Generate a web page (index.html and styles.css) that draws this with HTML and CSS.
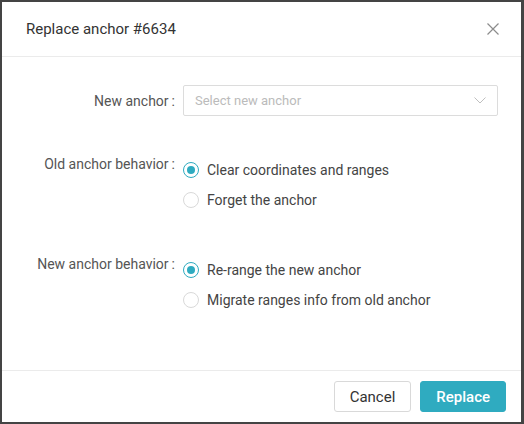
FILE: index.html
```html
<!DOCTYPE html>
<html lang="en">
<head>
    <meta charset="UTF-8">
    <meta name="viewport" content="width=device-width, initial-scale=1.0">
    <title>Replace anchor</title>
    <link rel="stylesheet" href="styles.css">
</head>
<body>
    <div class="backdrop">
        <div class="modal">
            <div class="modal-header">
                <h2 class="modal-title">Replace anchor #6634</h2>
                <button class="close-btn" aria-label="Close">
                    <svg width="12" height="12" viewBox="0 0 12 12">
                        <path d="M0.5 0.5 L11.5 11.5 M11.5 0.5 L0.5 11.5" stroke="#8c8c8c" stroke-width="1.2" fill="none"/>
                    </svg>
                </button>
            </div>

            <form class="modal-body">
                <div class="form-row form-row-select">
                    <label class="form-label">New anchor</label>
                    <div class="select">
                        <span class="select-placeholder">Select new anchor</span>
                        <svg class="select-arrow" width="12" height="7" viewBox="0 0 12 7">
                            <path d="M0.5 0.5 L6 6 L11.5 0.5" stroke="#bfbfbf" stroke-width="1" fill="none"/>
                        </svg>
                    </div>
                </div>

                <div class="form-row">
                    <label class="form-label">Old anchor behavior</label>
                    <div class="radio-group">
                        <label class="radio">
                            <input type="radio" name="oldBehavior" checked>
                            <span class="radio-circle"></span>
                            <span>Clear coordinates and ranges</span>
                        </label>
                        <label class="radio">
                            <input type="radio" name="oldBehavior">
                            <span class="radio-circle"></span>
                            <span>Forget the anchor</span>
                        </label>
                    </div>
                </div>

                <div class="form-row">
                    <label class="form-label">New anchor behavior</label>
                    <div class="radio-group">
                        <label class="radio">
                            <input type="radio" name="newBehavior" checked>
                            <span class="radio-circle"></span>
                            <span>Re-range the new anchor</span>
                        </label>
                        <label class="radio">
                            <input type="radio" name="newBehavior">
                            <span class="radio-circle"></span>
                            <span>Migrate ranges info from old anchor</span>
                        </label>
                    </div>
                </div>
            </form>

            <div class="modal-footer">
                <button class="btn btn-default">Cancel</button>
                <button class="btn btn-primary">Replace</button>
            </div>
        </div>
    </div>
</body>
</html>
```

FILE: styles.css
```css
body {
    margin: 0;
    padding: 0;
    font-family: Roboto, "Liberation Sans", Arial, sans-serif;
    background-color: #444444;
}

.backdrop {
    padding: 2px 3px 2px 2px;
    height: 420px;
}

.modal {
    display: flex;
    flex-direction: column;
    height: 420px;
    background-color: #ffffff;
}

.modal-header {
    display: flex;
    align-items: center;
    justify-content: space-between;
    height: 54px;
    padding: 0 22px 0 24px;
    border-bottom: 1px solid #ebebeb;
}

.modal-title {
    margin: 0;
    font-size: 15px;
    font-weight: 400;
    color: #333333;
}

.close-btn {
    border: none;
    background: none;
    padding: 0;
    cursor: pointer;
    display: flex;
}

.modal-body {
    flex: 1;
    padding: 28px 23px 0 0;
}

.form-row {
    display: grid;
    grid-template-columns: 173px 1fr;
    column-gap: 8px;
    margin-bottom: 40px;
}

.form-row-select {
    align-items: center;
    margin-bottom: 39px;
}

.form-label {
    text-align: right;
    font-size: 14px;
    line-height: 16px;
    color: #555555;
}

.form-label::after {
    content: ":";
    margin-left: 3px;
}

.radio-group {
    display: flex;
    flex-direction: column;
}

.form-row:not(.form-row-select) .form-label {
    padding-top: 1px;
}

.select {
    display: flex;
    align-items: center;
    justify-content: space-between;
    height: 29px;
    padding: 0 11px;
    border: 1px solid #dcdcdc;
    border-radius: 2px;
}

.select-placeholder {
    font-size: 13px;
    color: #bbbbbb;
}

.radio {
    display: flex;
    align-items: center;
    height: 30px;
    font-size: 14px;
    color: #444444;
    cursor: pointer;
}

.radio input {
    display: none;
}

.radio-circle {
    box-sizing: border-box;
    width: 16px;
    height: 16px;
    margin-right: 8px;
    border: 1px solid #d9d9d9;
    border-radius: 50%;
    position: relative;
}

.radio input:checked + .radio-circle {
    border-color: #2fabc0;
}

.radio input:checked + .radio-circle::after {
    content: "";
    position: absolute;
    top: 3px;
    left: 3px;
    width: 8px;
    height: 8px;
    border-radius: 50%;
    background-color: #2fabc0;
}

.modal-footer {
    display: flex;
    justify-content: flex-end;
    gap: 9px;
    padding: 10px 15px 10px 0;
    border-top: 1px solid #ebebeb;
}

.btn {
    height: 31px;
    padding: 0 15px;
    font-family: Roboto, "Liberation Sans", Arial, sans-serif;
    font-size: 15px;
    border-radius: 3px;
    cursor: pointer;
}

.btn-default {
    background-color: #ffffff;
    border: 1px solid #d9d9d9;
    color: #333333;
}

.btn-primary {
    background-color: #2fabc0;
    border: 1px solid #2fabc0;
    color: #ffffff;
    font-weight: 500;
}
```
